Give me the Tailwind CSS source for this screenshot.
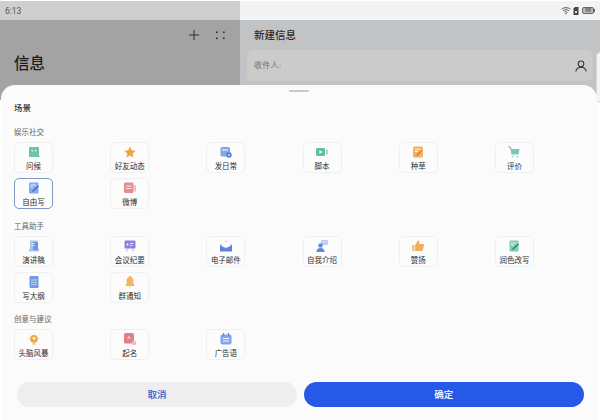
<!DOCTYPE html>
<html lang="zh-CN">
<head>
<meta charset="UTF-8">
<title>信息</title>
<script src="https://cdn.jsdelivr.net/npm/@tailwindcss/browser@4"></script>
</head>
<body class="bg-white">
<div class="relative w-[600px] h-[420px] overflow-hidden bg-white font-['Roboto','Noto_Sans_CJK_SC',sans-serif]">
  <!-- status bar -->
  <div class="flex h-[20px] border-t border-white">
    <div class="w-[240px] bg-[#cfcfcf] pl-[5px] text-[8.5px] leading-[20px] text-[#555]">6:13</div>
    <div class="flex-1 bg-[#f2f3f5] flex items-center justify-end pr-[5px] gap-[2px]">
      <svg width="10" height="8" viewBox="0 0 10 8" fill="none" stroke="#555" stroke-width="1"><path d="M0.5 2.2C3 0.2 7 0.2 9.5 2.2M2 3.8C3.8 2.4 6.2 2.4 8 3.8M3.5 5.3C4.4 4.6 5.6 4.6 6.5 5.3"/><circle cx="5" cy="6.8" r=".7" fill="#555" stroke="none"/></svg>
      <svg width="6" height="8" viewBox="0 0 6 8"><path d="M0.5 1.5L2 0H5.5V8H0.5Z" fill="#444"/><path d="M2 4H4V6H2Z" fill="#ddd"/></svg>
      <div class="flex items-center ml-[1px]">
        <div class="w-[12px] h-[7px] rounded-[2px] border border-[#666] bg-[#bbb] text-[5.5px] leading-[5px] text-center text-[#333]">98</div>
        <div class="w-[1px] h-[3px] bg-[#666]"></div>
      </div>
    </div>
  </div>
  <!-- background panes -->
  <div class="flex h-[80px]">
    <div class="w-[240px] bg-[#a3a3a3] relative">
      <div class="flex justify-end items-center h-[30px] pr-[15px] gap-[16px]">
        <svg width="12" height="12" viewBox="0 0 12 12" stroke="#2b2b2b" stroke-width="1"><path d="M6 1V11M1 6H11"/></svg>
        <svg width="9" height="9" viewBox="0 0 9 9" fill="#2b2b2b"><rect x="0" y="0.5" width="1.6" height="1.6"/><rect x="7" y="0.5" width="1.6" height="1.6"/><rect x="0" y="6.5" width="1.6" height="1.6"/><rect x="7" y="6.5" width="1.6" height="1.6"/></svg>
      </div>
      <h1 class="pl-[14px] text-[15.5px] leading-[20px] mt-[4px] font-medium text-[#1c1c1c]">信息</h1>
    </div>
    <div class="flex-1 bg-[#c2c3c5] pl-[7px] pr-[7px]">
      <div class="pl-[7px] h-[30px] leading-[32px] text-[10.5px] font-medium text-[#2a2a2a]">新建信息</div>
      <div class="flex items-center justify-between h-[31px] rounded-[6px] bg-[#cbcbcb] pl-[7px] pr-[6px]">
        <span class="text-[8px] tracking-[0.3px] text-[#6e6e6e]">收件人:</span>
        <svg width="12" height="12" viewBox="0 0 12 12" fill="none" stroke="#333" stroke-width="1.1"><circle cx="6" cy="3.8" r="2.8"/><path d="M0.8 11.5C1.2 8.6 3.2 7.2 6 7.2C8.8 7.2 10.8 8.6 11.2 11.5"/></svg>
      </div>
    </div>
  </div>
  <!-- side rim -->
  <div class="absolute left-[596px] top-[52px] w-[8px] h-[51px] rounded-[5px] bg-[#f4f4f4] border border-[#d8d8d8]"></div>
  <!-- bottom sheet -->
  <div class="absolute left-[1px] top-[85px] bottom-0 w-[596px] rounded-t-[14px] bg-[#fbfbfb] px-[13px]">
    <div class="mx-auto mt-[5px] w-[20px] h-[2px] rounded-full bg-[#c8c8c8]"></div>
    <h2 class="mt-[10px] h-[12px] leading-[13px] text-[8.5px] font-medium text-[#333]">场景</h2>

    <h3 class="mt-[12px] h-[12px] leading-[14px] text-[7.5px] text-[#666]">娱乐社交</h3>
    <div class="mt-[4px] grid grid-cols-[repeat(6,39px)] justify-between gap-y-[5px] w-[520px] text-[7.5px] leading-[10px] text-[#2e2e2e]">
      <div class="flex flex-col items-center h-[31px] rounded-[5px] border border-[#f0f0f0] bg-[#fcfcfc] pt-[3px]">
        <svg width="12" height="12" viewBox="0 0 12 12"><path d="M2 1H10C10.6 1 11 1.4 11 2V9.5L12 11H2C1.4 11 1 10.6 1 10V2C1 1.4 1.4 1 2 1Z" fill="#6cc5a4"/><rect x="3.5" y="4" width="1.4" height="1.4" fill="#fff"/><rect x="7" y="4" width="1.4" height="1.4" fill="#fff"/></svg>
        <span class="mt-[4px]">问候</span>
      </div>
      <div class="flex flex-col items-center h-[31px] rounded-[5px] border border-[#f0f0f0] bg-[#fcfcfc] pt-[3px]">
        <svg width="12" height="12" viewBox="0 0 12 12"><path d="M6 .5L7.7 4.2L11.7 4.7L8.7 7.4L9.5 11.4L6 9.4L2.5 11.4L3.3 7.4L.3 4.7L4.3 4.2Z" fill="#eda43f"/></svg>
        <span class="mt-[4px]">好友动态</span>
      </div>
      <div class="flex flex-col items-center h-[31px] rounded-[5px] border border-[#f0f0f0] bg-[#fcfcfc] pt-[3px]">
        <svg width="12" height="12" viewBox="0 0 12 12"><rect x=".5" y="1" width="9.5" height="9.5" rx="1.5" fill="#7ea5ee"/><rect x="2" y="3.5" width="6" height="1" fill="#fff"/><circle cx="9" cy="9" r="2.7" fill="#4e78d8"/><path d="M9 7.8V10.2M7.8 9H10.2" stroke="#fff" stroke-width=".7"/></svg>
        <span class="mt-[4px]">发日常</span>
      </div>
      <div class="flex flex-col items-center h-[31px] rounded-[5px] border border-[#f0f0f0] bg-[#fcfcfc] pt-[3px]">
        <svg width="12" height="12" viewBox="0 0 12 12"><rect x="0" y="2" width="9" height="8" rx="1.2" fill="#5cc498"/><path d="M3.5 4.2V7.8L6.5 6Z" fill="#fff"/><path d="M10 4L12 3V9L10 8Z" fill="#a5dfc6"/></svg>
        <span class="mt-[4px]">脚本</span>
      </div>
      <div class="flex flex-col items-center h-[31px] rounded-[5px] border border-[#f0f0f0] bg-[#fcfcfc] pt-[3px]">
        <svg width="12" height="12" viewBox="0 0 12 12"><rect x="1" y=".5" width="10" height="11" rx="1.5" fill="#f0b260"/><path d="M3 3.2H8.5M3 5.5H6" stroke="#fff" stroke-width=".9"/><path d="M4.5 9.5L9.5 5" stroke="#d9731f" stroke-width="1.2"/></svg>
        <span class="mt-[4px]">种草</span>
      </div>
      <div class="flex flex-col items-center h-[31px] rounded-[5px] border border-[#f0f0f0] bg-[#fcfcfc] pt-[3px]">
        <svg width="12" height="12" viewBox="0 0 12 12"><path d="M.5 .5L2.5 1.5L3 3" stroke="#3e8f86" stroke-width=".9" fill="none"/><path d="M2.5 3H11.5L10.5 8.5H3.5Z" fill="#78c8ba"/><circle cx="4.5" cy="10.5" r=".8" fill="#78c8ba"/><circle cx="9.5" cy="10.5" r=".8" fill="#78c8ba"/></svg>
        <span class="mt-[4px]">评价</span>
      </div>
      <div class="flex flex-col items-center h-[31px] rounded-[5px] border border-[#7f98c4] bg-[#fcfcfc] pt-[3px]">
        <svg width="12" height="12" viewBox="0 0 12 12"><rect x="1" y=".5" width="9.5" height="11" rx="1" fill="#85a8ef"/><path d="M2.5 3H8M2.5 5H5" stroke="#fff" stroke-width=".8"/><path d="M4.5 9.5L10.5 4" stroke="#3d64c8" stroke-width="1.2"/></svg>
        <span class="mt-[4px]">自由写</span>
      </div>
      <div class="flex flex-col items-center h-[31px] rounded-[5px] border border-[#f0f0f0] bg-[#fcfcfc] pt-[3px]">
        <svg width="12" height="12" viewBox="0 0 12 12"><rect x="0" y=".5" width="9.5" height="10.5" rx="1.5" fill="#e58a8f"/><rect x="9.5" y="3" width="2.5" height="6.5" rx=".8" fill="#f0bcbe"/><path d="M2 4H7.5M2 6.5H7.5" stroke="#fff" stroke-width=".8"/></svg>
        <span class="mt-[4px]">微博</span>
      </div>
    </div>

    <h3 class="mt-[11px] h-[12px] leading-[14px] text-[7.5px] text-[#666]">工具助手</h3>
    <div class="mt-[4px] grid grid-cols-[repeat(6,39px)] justify-between gap-y-[5px] w-[520px] text-[7.5px] leading-[10px] text-[#2e2e2e]">
      <div class="flex flex-col items-center h-[31px] rounded-[5px] border border-[#f0f0f0] bg-[#fcfcfc] pt-[3px]">
        <svg width="12" height="12" viewBox="0 0 12 12"><path d="M2 .5H9.5V9H11V11.5H1V9H2Z" fill="#a9c4ef"/><rect x="5" y="2" width="5" height="8" fill="#6d95de"/><path d="M3.5 3.5H7M3.5 5.5H7" stroke="#fff" stroke-width=".6"/></svg>
        <span class="mt-[4px]">演讲稿</span>
      </div>
      <div class="flex flex-col items-center h-[31px] rounded-[5px] border border-[#f0f0f0] bg-[#fcfcfc] pt-[3px]">
        <svg width="12" height="12" viewBox="0 0 12 12"><rect x=".5" y=".5" width="11" height="8" rx="1" fill="#8f7fdd"/><path d="M3 8.5V11.5M9 8.5V11.5" stroke="#b6abe9" stroke-width="1"/><circle cx="3.5" cy="4.5" r="1" fill="#fff"/><path d="M6 3.5H9.5M6 5.5H8.5" stroke="#fff" stroke-width=".8"/></svg>
        <span class="mt-[4px]">会议纪要</span>
      </div>
      <div class="flex flex-col items-center h-[31px] rounded-[5px] border border-[#f0f0f0] bg-[#fcfcfc] pt-[3px]">
        <svg width="12" height="12" viewBox="0 0 12 12"><path d="M0 4.5L6 .5L12 4.5V11H0Z" fill="#c5d4f5"/><rect x="2" y="2" width="8" height="5" fill="#fff"/><path d="M0 5L6 8.5L12 5V11.5H0Z" fill="#5f80dc"/></svg>
        <span class="mt-[4px]">电子邮件</span>
      </div>
      <div class="flex flex-col items-center h-[31px] rounded-[5px] border border-[#f0f0f0] bg-[#fcfcfc] pt-[3px]">
        <svg width="12" height="12" viewBox="0 0 12 12"><rect x="5" y="0" width="7" height="5" rx="1" fill="#b5cbf2"/><path d="M6.5 1.8H10.5" stroke="#fff" stroke-width=".6"/><circle cx="4.5" cy="5.5" r="2.2" fill="#5f8ad8"/><path d="M.5 12C.5 9.3 2 8 4.5 8C7 8 8.5 9.3 8.5 12Z" fill="#5f8ad8"/></svg>
        <span class="mt-[4px]">自我介绍</span>
      </div>
      <div class="flex flex-col items-center h-[31px] rounded-[5px] border border-[#f0f0f0] bg-[#fcfcfc] pt-[3px]">
        <svg width="12" height="12" viewBox="0 0 12 12"><rect x="0" y="5" width="2.6" height="6" rx=".6" fill="#f2c07e"/><path d="M3.2 5L6 .5C7.2 .5 7.6 1.5 7.2 2.8L6.9 4H11C11.8 4 12.2 4.7 12 5.5L10.8 10C10.6 10.7 10.1 11 9.5 11H3.2Z" fill="#eeae5a"/></svg>
        <span class="mt-[4px]">赞扬</span>
      </div>
      <div class="flex flex-col items-center h-[31px] rounded-[5px] border border-[#f0f0f0] bg-[#fcfcfc] pt-[3px]">
        <svg width="12" height="12" viewBox="0 0 12 12"><rect x="1.5" y=".5" width="9" height="11" rx="1" fill="#7ecbb6"/><path d="M3 3H8.5M3 5H6" stroke="#fff" stroke-width=".8"/><path d="M4.5 9.5L10.5 4" stroke="#257a68" stroke-width="1.1"/></svg>
        <span class="mt-[4px]">润色改写</span>
      </div>
      <div class="flex flex-col items-center h-[31px] rounded-[5px] border border-[#f0f0f0] bg-[#fcfcfc] pt-[3px]">
        <svg width="12" height="12" viewBox="0 0 12 12"><rect x="1.5" y="0" width="9" height="12" rx="1.2" fill="#6f9be4"/><path d="M3 4H9M3 6.3H9M3 8.6H9" stroke="#d5e2f8" stroke-width=".8"/></svg>
        <span class="mt-[4px]">写大纲</span>
      </div>
      <div class="flex flex-col items-center h-[31px] rounded-[5px] border border-[#f0f0f0] bg-[#fcfcfc] pt-[3px]">
        <svg width="12" height="12" viewBox="0 0 12 12"><path d="M6 0C7 0 7.3 .6 7.3 1.2C9 1.8 9.5 3.2 9.5 5V8L11 10H1L2.5 8V5C2.5 3.2 3 1.8 4.7 1.2C4.7 .6 5 0 6 0Z" fill="#f0b664"/><path d="M4.5 10.5H7.5L6 12Z" fill="#f4cf9a"/></svg>
        <span class="mt-[4px]">群通知</span>
      </div>
    </div>

    <h3 class="mt-[10px] h-[12px] leading-[14px] text-[7.5px] text-[#666]">创意与建议</h3>
    <div class="mt-[4px] grid grid-cols-[repeat(6,39px)] justify-between gap-y-[5px] w-[520px] text-[7.5px] leading-[10px] text-[#2e2e2e]">
      <div class="flex flex-col items-center h-[31px] rounded-[5px] border border-[#f0f0f0] bg-[#fcfcfc] pt-[3px]">
        <svg width="12" height="12" viewBox="0 0 12 12"><circle cx="6" cy="5.8" r="3.9" fill="#eba945"/><circle cx="6" cy="5.3" r="1.2" fill="#fff"/><rect x="4.5" y="9.8" width="3" height="2" fill="#f3c986"/><path d="M6 0V1.2M1 1.2L1.9 2.1M11 1.2L10.1 2.1M0 5.5H1.2M10.8 5.5H12" stroke="#f3c986" stroke-width=".7"/></svg>
        <span class="mt-[4px]">头脑风暴</span>
      </div>
      <div class="flex flex-col items-center h-[31px] rounded-[5px] border border-[#f0f0f0] bg-[#fcfcfc] pt-[3px]">
        <svg width="12" height="12" viewBox="0 0 12 12"><rect x="0" y="0" width="10" height="10.5" rx="1.5" fill="#e08085"/><path d="M8 8H12V11C12 11.6 11.6 12 11 12H8Z" fill="#f1bcbe"/><path d="M3.5 6L5 3.5L6.5 6" stroke="#fff" stroke-width=".7" fill="none"/></svg>
        <span class="mt-[4px]">起名</span>
      </div>
      <div class="flex flex-col items-center h-[31px] rounded-[5px] border border-[#f0f0f0] bg-[#fcfcfc] pt-[3px]">
        <svg width="12" height="12" viewBox="0 0 12 12"><rect x=".5" y="1.5" width="11" height="10" rx="1.8" fill="#7fa6ee"/><path d="M3.5 0V3M8.5 0V3" stroke="#5f88e0" stroke-width="1.2"/><path d="M3 5.5H9M3 8H9" stroke="#fff" stroke-width="1"/></svg>
        <span class="mt-[4px]">广告语</span>
      </div>
    </div>

    <div class="mt-[22px] ml-[3px] flex gap-[6.5px] w-[567px] text-[9.5px] font-medium">
      <div class="flex-1 h-[25px] pt-[1px] rounded-full bg-[#eeeeee] flex items-center justify-center text-[#2f5bc8]">取消</div>
      <div class="flex-1 h-[25px] pt-[1px] rounded-full bg-[#2759e8] flex items-center justify-center text-white">确定</div>
    </div>
  </div>
</div>
</body>
</html>
